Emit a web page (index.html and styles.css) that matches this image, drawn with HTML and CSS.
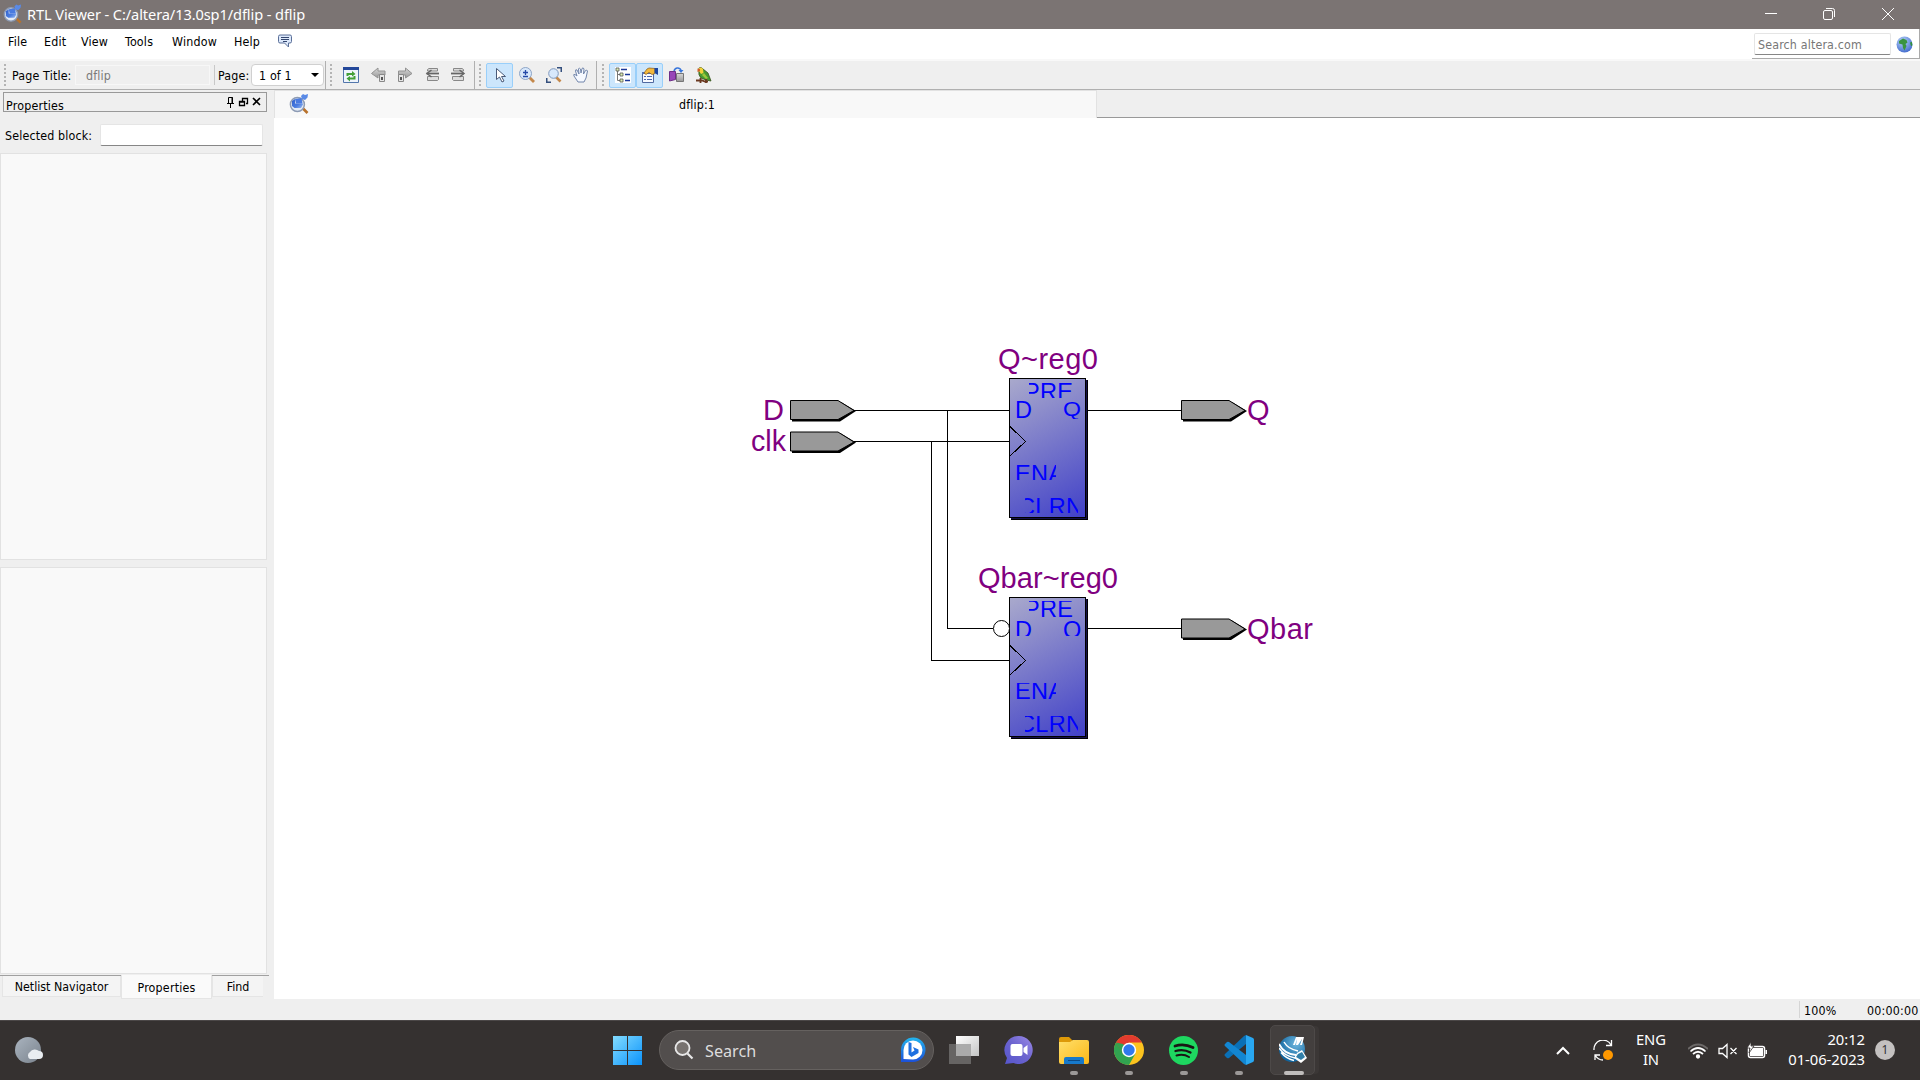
FILE: index.html
```html
<!DOCTYPE html>
<html lang="en">
<head>
<meta charset="utf-8">
<title>RTL Viewer - C:/altera/13.0sp1/dflip - dflip</title>
<link rel="stylesheet" href="styles.css">
</head>
<body>
<svg class="defs" width="0" height="0">
  <defs>
    <linearGradient id="lens" x1="0" y1="0" x2="1" y2="1"><stop offset="0" stop-color="#2f60cc"/><stop offset=".6" stop-color="#4b7de0"/><stop offset="1" stop-color="#9cbcf0"/></linearGradient>
    <linearGradient id="gray" x1="0" y1="0" x2="0" y2="1"><stop offset="0" stop-color="#d8d8d8"/><stop offset="1" stop-color="#999"/></linearGradient>
    <linearGradient id="block" gradientUnits="userSpaceOnUse" x1="1010" y1="379" x2="1086" y2="518"><stop offset="0" stop-color="#a9a9cc"/><stop offset="1" stop-color="#4040c8"/></linearGradient>
    <linearGradient id="win" x1="0" y1="0" x2="1" y2="1"><stop offset="0" stop-color="#83dcff"/><stop offset="1" stop-color="#0b93fb"/></linearGradient>
    <linearGradient id="bing" x1="0" y1="0" x2="0" y2="1"><stop offset="0" stop-color="#22b5ee"/><stop offset="1" stop-color="#1c50d8"/></linearGradient>
    <linearGradient id="chat" x1="1" y1="0" x2="0" y2="1"><stop offset="0" stop-color="#9c8ae8"/><stop offset=".5" stop-color="#6b63cf"/><stop offset="1" stop-color="#5656cc"/></linearGradient>
    <linearGradient id="folder" x1="0" y1="0" x2="1" y2="1"><stop offset="0" stop-color="#ffdf6b"/><stop offset="1" stop-color="#fcb816"/></linearGradient>
    <linearGradient id="moon" x1="0" y1="0" x2="1" y2="1"><stop offset="0" stop-color="#aab4bf"/><stop offset="1" stop-color="#7a838d"/></linearGradient>
    <linearGradient id="tv" x1="0" y1="0" x2="1" y2="1"><stop offset="0" stop-color="#fff"/><stop offset="1" stop-color="#c4c4c4"/></linearGradient>
    <radialGradient id="qt" cx=".65" cy=".3" r=".7"><stop offset="0" stop-color="#6fb6dd"/><stop offset="1" stop-color="#0f649e"/></radialGradient>
    <radialGradient id="globe" cx=".4" cy=".3" r=".75"><stop offset="0" stop-color="#b9d5fb"/><stop offset="1" stop-color="#3f68cc"/></radialGradient>
    <symbol id="viewer" viewBox="0 0 20 20">
      <path d="M14 14.500l4.500 4.500" stroke="#b8722c" stroke-width="2.600"/>
      <circle cx="8.400" cy="10.500" r="7" fill="#e4ebf5" stroke="#8d9bb4" stroke-width="1.500"/>
      <path d="M3 7l3-2v4.500h7.500l.5 1-2 3.500H5.500L3 12z" fill="url(#lens)"/>
      <path d="M6 5l6.500-1 1 5.500H7z" fill="#4a7be0"/>
      <path d="M12 2l2-2 2 1 3-1-.5 3.500L16 6l-3-1z" fill="#5a8ae6"/>
    </symbol>
  </defs>
</svg>
<div class="window">
  <header class="titlebar">
    <svg class="app-icon" width="19" height="20"><use href="#viewer"/></svg>
    <h1 class="title">RTL Viewer - C:/altera/13.0sp1/dflip - dflip</h1>
    <svg class="caption" width="150" height="29" fill="none" stroke="#fff">
      <path d="M15 13.500h12M132 8l12 12M144 8l-12 12"/>
      <rect x="73.500" y="10.500" width="9" height="9" rx="1.500"/><path d="M76 8.500h6.500a2 2 0 0 1 2 2V17"/>
    </svg>
  </header>
  <nav class="menubar">
    <span class="m1">File</span><span class="m2">Edit</span><span class="m3">View</span><span class="m4">Tools</span><span class="m5">Window</span><span class="m6">Help</span>
    <svg class="feedback" width="14" height="14"><path d="M2 1h10q1.500 0 1.500 1.500v5q0 1.500-1.500 1.500h-1.500v4L6.500 9H2Q.5 9 .5 7.500v-5Q.5 1 2 1z" fill="#dce8fa" stroke="#5a6f98"/><path d="M3 3.500h8M3 5.500h8M5 7.500h4" stroke="#33466f"/></svg>
    <div class="websearch">
      <div class="webinput">Search altera.com</div>
      <svg width="17" height="17"><circle cx="8.500" cy="8.500" r="8" fill="url(#globe)"/><path d="M3 5l4-2.500L10.500 4l1 2.500-2 1.500 1 2-2 4.500L7 12l-.5-3.500-3.500-1z" fill="#3a9440"/><path d="M14 6.500l2-.5.300 3.500-1.300.5z" fill="#2f8f3b"/></svg>
    </div>
  </nav>
  <div class="toolbars">
    <section class="bar bar-page">
      <i class="grip"></i><span class="page-title">Page Title:</span><div class="title-field">dflip</div><i class="split"></i><span class="page-label">Page:</span>
      <div class="select"><span>1 of 1</span><svg width="8" height="4"><path d="M0 0h8L4 4z"/></svg></div>
    </section>
    <section class="bar bar-nav">
      <i class="grip"></i>
      <svg class="n1" width="16" height="16"><path d="M.5.5h15v15H.5z" fill="#eef4fc" stroke="#5377ac"/><path d="M0 0h16v3H0z" fill="#24489a"/><path d="M3.500 9V6H9V4l3.500 3L9 9.500V8H5.500v1zM12.500 9v3.500H7v2L3.500 11.500 7 9v1.500h3.500V9z" fill="#43a038"/></svg>
      <svg class="n2" width="16" height="16"><path d="M.5 6.500L7 1v3h7v4H7v3z" fill="url(#gray)" stroke="#929292"/><path d="M8.500 7.500h5v7h-5z" fill="#e6e6e6" stroke="#888"/><path d="M10 10h2v3h-2z" fill="#555"/></svg>
      <svg class="n3" width="16" height="16"><path d="M15 6.500L8.500 1v3h-7v4h7v3z" fill="url(#gray)" stroke="#929292"/><path d="M1.500 7.500h5v7h-5z" fill="#e6e6e6" stroke="#888"/><path d="M3 10h2v3H3z" fill="#555"/></svg>
      <svg class="n4" width="16" height="16"><path d="M2.500 4V2.500L4 1.500h8.500V4zM2.500 9.500v4h10l1-1v-3z" fill="#ddd" stroke="#888"/><path d="M1.500 6.500h12.500" stroke="#666" stroke-width="1.800"/><path d="M6.500 3L2 6.500 6.500 10" fill="none" stroke="#666" stroke-width="1.500"/></svg>
      <svg class="n5" width="16" height="16"><path d="M13.500 4V2.500L12 1.500H3.500V4zM13.500 9.500v4h-10l-1-1v-3z" fill="#ddd" stroke="#888"/><path d="M1 6.500h12.500" stroke="#666" stroke-width="1.800"/><path d="M9.500 3L14 6.500 9.500 10" fill="none" stroke="#666" stroke-width="1.500"/></svg>
    </section>
    <section class="bar bar-mode">
      <i class="grip"></i>
      <button class="tool on"><svg width="16" height="16"><path d="M4.500 1.500v11l3-2.500 2.500 5 2-1-2.500-4.500h4z" fill="#fff" stroke="#4a5a78"/></svg></button>
      <button class="tool"><svg width="16" height="16"><path d="M10.500 10.500l4.500 4.500" stroke="#c4884a" stroke-width="2.800"/><circle cx="6.500" cy="6.500" r="6" fill="#d8e8fb" stroke="#8da4c6"/><path d="M4 5.500h5M6.500 3v5M4 9.500h5" stroke="#2549a8" stroke-width="1.300"/></svg></button>
      <button class="tool"><svg width="16" height="16"><path d="M11 .75h4.250V5M.75 11v4.250H5" fill="none" stroke="#34507e" stroke-width="1.500"/><path d="M10 10l4.500 4.500" stroke="#c4884a" stroke-width="2.600"/><circle cx="7.500" cy="6.500" r="4.800" fill="#d8e8fb" stroke="#7f98bd"/></svg></button>
      <button class="tool"><svg width="16" height="16"><path d="M5 15L1 9q-1-2 1-1.500L4 9 2.500 4q0-2 1.500-1l2 4-.5-5q.8-2 2 0L8 6l1-4.500q1.300-1.500 2 .5L10.500 7l2-3.500q1.500-1 2 .5L13 11l-2 4z" fill="#f6f9ff" stroke="#7286ab"/></svg></button>
    </section>
    <section class="bar bar-view">
      <i class="grip"></i>
      <button class="tool on"><svg width="16" height="16"><path fill="#fff" d="M0 0h16v16H0z"/><path d="M2.500 3v10.500H7M2.500 7.500H7" fill="none" stroke="#777"/><path d="M1 1h3v3H1zM5 6h3v3H5zM5 12h3v3H5z" fill="#dcedb0" stroke="#555" stroke-width=".8"/><path d="M6 2.500h6M10 7.500h5M10 13.500h5" stroke="#1c3899" stroke-width="1.500"/></svg></button>
      <button class="tool on"><svg width="16" height="16"><path d="M.5 5.500h11v10H.5z" fill="#f6f9ff" stroke="#5069a0"/><path d="M0 5h12v2H0z" fill="#5270b5"/><path d="M2 9.500h2M5 9.500h5M2 12.500h2M5 12.500h5" stroke="#4a66ae"/><path d="M2 6l3-4 2-1 6 .5v5l-3 1-3-2-3 2z" fill="#f2b83c" stroke="#8a5a18" stroke-width=".7"/><path d="M12.500 1H16v7l-3.500-2z" fill="#1d47a2"/></svg></button>
      <button class="tool"><svg width="16" height="16"><path d="M5 4q1-3.500 4-3t3 3" fill="none" stroke="#3976db" stroke-width="1.500"/><path d="M9.500 3h5L12 6z" fill="#3976db"/><path d="M.5 4.500h6v8l-6 1.500z" fill="#9847b8" stroke="#6e2e89"/><path d="M7.500 6.500h7v8h-7z" fill="url(#gray)" stroke="#777"/></svg></button>
      <button class="tool"><svg width="16" height="16"><path d="M3 1q2-1.500 4 1l5 4 3 8-5-1-5-2Q2 8 3 4z" fill="#469a30" stroke="#37501c" stroke-width=".8"/><path d="M3 1q2.500-1.500 4 1l.5 4L5 7 3 4z" fill="#f3d239"/><path d="M1.500 1.500L4 2v2L1.500 5z" fill="#d26025"/><path d="M8 6l4 5-2 1-4-4z" fill="#9ac83a"/><path d="M0 13.500h6l3 1h3M4.500 11v5M10 12v4" fill="none" stroke="#6a3820" stroke-width="1.800"/></svg></button>
    </section>
  </div>
  <main class="work">
    <aside class="dock">
      <div class="dock-head"><span>Properties</span>
        <svg width="36" height="12" fill="none" stroke="#000"><path d="M2.500 7V1.500h4V7M1 7.500h7M4.500 8v4M6 1v6"/><path d="M16.500 5V2.500h5v5H20M16 2.500h6M13.500 5.500h5v4h-5zM13 6h6" stroke-width="1.300"/><path d="M27 2l7 7M34 2l-7 7" stroke-width="1.600"/></svg>
      </div>
      <div class="selected"><span>Selected block:</span><div class="selected-field"></div></div>
      <div class="pane pane-top"></div>
      <div class="pane pane-bottom"></div>
      <div class="dock-tabs"><span class="dt dt1">Netlist Navigator</span><span class="dt dt-on">Properties</span><span class="dt dt3">Find</span></div>
    </aside>
    <section class="editor">
      <div class="tabs"><div class="doc-tab"><svg width="20" height="20"><use href="#viewer"/></svg><span>dflip:1</span></div><div class="tab-rest"></div></div>
      <svg class="canvas" width="1646" height="881" viewBox="274 118 1646 881">
        <g fill="none" stroke="#000" shape-rendering="crispEdges">
          <path d="M854 410.500h156M854 441.500h156M1088 410.500h93M1088 628.500h93M947.500 410v218.500H993M931.500 441v219.500H1010"/>
        </g>
        <g class="ports">
          <g id="port"><path d="M792 402h49l15 9-16 10.500H792z" fill="#000"/><path d="M790.500 400.500H838l16 10L838 419.500h-47.500z" fill="#999" stroke="#000"/></g>
          <use href="#port" y="31.500"/><use href="#port" x="391"/><use href="#port" x="391" y="218.500"/>
        </g>
        <g id="reg" shape-rendering="crispEdges">
          <path d="M1011 380h77v140h-77z" fill="#15104a" stroke="none"/><path d="M1011 519.500h76.500V380" fill="none" stroke="#000"/>
          <path d="M1009.500 378.500h76v139h-76z" fill="url(#block)" stroke="#000"/>
          <path d="M1010 426.500l15.500 15-15.500 14.500" fill="none" stroke="#000"/>
        </g>
        <use href="#reg" y="219"/>
        <circle cx="1001.500" cy="628.500" r="8" fill="#fff" stroke="#000"/>
        <g class="name">
          <text x="763" y="420">D</text>
          <text x="751" y="451" textLength="35" lengthAdjust="spacingAndGlyphs">clk</text>
          <text x="998" y="369" textLength="100">Q~reg0</text>
          <text x="978" y="588" textLength="140">Qbar~reg0</text>
          <text x="1247" y="420">Q</text>
          <text x="1247" y="639" textLength="66">Qbar</text>
        </g>
        <g class="pin">
          <svg x="1029" y="382" width="44" height="16"><text x="-5" y="17.500" textLength="49">PRE</text></svg>
          <svg x="1016" y="401" width="17" height="18"><text x="-1" y="17">D</text></svg>
          <svg x="1063" y="401" width="18" height="18"><text class="pin-q" x="0" y="14.500" textLength="18" lengthAdjust="spacingAndGlyphs">Q</text></svg>
          <svg x="1016" y="464" width="40" height="16"><text x="-1" y="17.500" textLength="49">ENA</text></svg>
          <svg x="1025" y="497" width="53" height="16"><text x="-7" y="17.500" textLength="65">CLRN</text></svg>
          <svg x="1029" y="601" width="44" height="17"><text x="-5" y="16" textLength="49">PRE</text></svg>
          <svg x="1016" y="620" width="17" height="16"><text x="-1" y="17.500">D</text></svg>
          <svg x="1063" y="620" width="18" height="16"><text x="0" y="17.500">Q</text></svg>
          <svg x="1016" y="683" width="40" height="17"><text x="-1" y="16" textLength="49">ENA</text></svg>
          <svg x="1025" y="716" width="53" height="17"><text x="-7" y="16" textLength="65">CLRN</text></svg>
        </g>
      </svg>
    </section>
  </main>
  <footer class="status"><span class="zoom">100%</span><span class="clock">00:00:00</span></footer>
  <div class="taskbar">
    <svg class="weather" width="30" height="28"><circle cx="14" cy="13" r="13" fill="url(#moon)"/><path d="M16 22a4 4 0 0 1 0-7 6 6 0 0 1 9-1 4 4 0 0 1 0 8z" fill="#e9edf1"/></svg>
    <div class="apps">
      <div class="app"><svg width="29" height="29" fill="url(#win)"><path d="M0 0h14v14H0zM15 0h14v14H15zM0 15h14v14H0zM15 15h14v14H15z"/></svg></div>
      <div class="search">
        <svg width="20" height="20" fill="none" stroke="#e8e8e8"><circle cx="8.500" cy="8" r="7" fill="#77726f" stroke-width="1.800"/><path d="M13.500 13.500l5 5" stroke-width="2.200"/></svg>
        <span>Search</span>
        <svg class="bing" width="26" height="26"><path d="M1 25V12.500A12.250 12.250 0 1 1 13 25z" fill="url(#bing)"/><path d="M3.500 22V13a9.500 9.500 0 1 1 9.500 9.500z" fill="#fff"/><path d="M8.500 5v12.500l3 2.500 7-4v-3.500L13 10l1.500 3.500-3 2V6z" fill="#1f70e0"/></svg>
      </div>
      <div class="app"><svg width="30" height="28"><path d="M0 8h22v20H0z" fill="#666463"/><path d="M7 0h23v20H7z" fill="url(#tv)"/><path d="M7 8h15v12H7z" fill="#aaa"/></svg></div>
      <div class="app"><svg width="29" height="28"><path d="M14.500 0a14 14 0 1 1-5 27L1 28l2-6A14 14 0 0 1 14.500 0z" fill="url(#chat)"/><rect x="6.500" y="8" width="12" height="12" rx="2" fill="#fff"/><path d="M19.500 12l4-3v10l-4-3z" fill="#fff"/></svg></div>
      <div class="app run"><svg width="30" height="27"><path d="M0 2q0-2 2-2h8l4 4v4H0z" fill="#dd9908"/><path d="M0 5h11l3-2h14q2 0 2 2v20q0 2-2 2H2q-2 0-2-2z" fill="url(#folder)"/><path d="M5 27v-5q0-2 2-2h16q2 0 2 2v5z" fill="#1779ca"/><path d="M9 23.500h12" stroke="#0b4a86"/></svg></div>
      <div class="app run"><svg width="30" height="30"><circle cx="15" cy="15" r="15" fill="#fcc31e"/><path d="M15 15L2 7.500A15 15 0 0 0 15 30l6.500-11.500z" fill="#31a350"/><path d="M2 7.500a15 15 0 0 1 26 0H15L9 19z" fill="#e33b2e"/><path d="M2 7.500L8.500 18.500 15 15 9 9z" fill="#31a350"/><circle cx="15" cy="15" r="7.200" fill="#fff"/><circle cx="15" cy="15" r="5.700" fill="#3079ed"/></svg></div>
      <div class="app run"><svg width="29" height="29"><circle cx="14.500" cy="14.500" r="14.500" fill="#1ed760"/><g fill="none" stroke="#191414" stroke-linecap="round"><path d="M6 10q9-3 18 1.500" stroke-width="2.800"/><path d="M6.500 15q8-2.500 15 1.500" stroke-width="2.300"/><path d="M7.500 19.500q7-2 12.500 1.500" stroke-width="2"/></g></svg></div>
      <div class="app run"><svg width="30" height="30"><path d="M22 0l-2 1L1.500 18.500q-2 1.500 0 3L3 23q1 .5 2 0L22 9z" fill="#0a70b6"/><path d="M22 30l-2-1L1.500 11.500q-2-1.500 0-3L3 7q1-.5 2 0l17 13z" fill="#1286d2"/><path d="M22 0l7 3q1 .5 1 2v20q0 1.500-1 2l-7 3z" fill="#29a7f1"/></svg></div>
      <div class="app active"><svg width="28" height="30"><circle cx="13" cy="14" r="13" fill="url(#qt)"/><g fill="none" stroke="#fff"><path d="M0 9q5 10 17 11" stroke-width="1.800"/><path d="M0 13q5 8 16 10M2 17.500q5 6 13 8M5 7q4 7 14 9" stroke-width="1.500"/></g><path d="M14 10l3-8h8l-2 8h-2l2-6-4 6h-2l1-6-2 6z" fill="#fff"/><path d="M18 18l5-3 5 8-6 5-7-5z" fill="#fff"/><path d="M19 19l4-2 3 5-4 3-5-3z" fill="#317fa9"/></svg></div>
    </div>
    <div class="tray">
      <svg class="chev" width="14" height="9"><path d="M1 8l6-6 6 6" fill="none" stroke="#fff" stroke-width="2"/></svg>
      <svg class="sync" width="21" height="21" fill="none" stroke="#fff" stroke-width="1.300"><path d="M1 10A9 9 0 0 1 18 5M18.500 0v5.500H13M2 20v-5h5M2 15q3 5 8 5"/><circle cx="15" cy="15" r="5" fill="#ff9800" stroke="none"/></svg>
      <div class="lang">ENG<br>IN</div>
      <svg class="wifi" width="20" height="16" fill="none" stroke="#fff" stroke-width="1.700"><path d="M0 6q10-9 20 0" stroke="#6c6968"/><path d="M2.500 8.500q7.500-7 15 0M5 11q5-4.500 10 0"/><circle cx="10" cy="13.500" r="1.300" fill="#fff"/></svg>
      <svg class="mute" width="20" height="16" fill="none" stroke="#fff" stroke-width="1.300"><path d="M1 5.500h3.500L9 1.500v13l-4.500-4H1zM12.500 5l6 6M18.500 5l-6 6"/></svg>
      <svg class="batt" width="21" height="17"><rect x="1.500" y="4.500" width="16" height="11" rx="2" fill="none" stroke="#fff" stroke-width="1.500"/><path d="M3 6h13v8H3zM18.500 8H20v4h-1.500z" fill="#fff"/><path d="M4 0L0 6h3l-1 5 5-7H4z" fill="#fff" stroke="#363130" stroke-width=".8"/></svg>
      <div class="time">20:12<br>01-06-2023</div>
      <span class="badge">1</span>
    </div>
  </div>
</div>
</body>
</html>
```
FILE: styles.css
```css
* { box-sizing: border-box; }
body { margin: 0; background: #efefef; color: #000; font: 12.350px/16px "DejaVu Sans Condensed", "DejaVu Sans", sans-serif; font-stretch: condensed; white-space: nowrap; }
svg { display: block; flex: none; }
.defs { position: absolute; }
.window { width: 1920px; height: 1080px; display: flex; flex-direction: column; overflow: hidden; }

.titlebar { height: 29px; background: #7b7473; display: flex; align-items: center; color: #fff; }
.app-icon { margin: -2px 5px 0 3px; }
.title { margin: -1px 0 0; font: 14.600px/20px "Noto Sans", sans-serif; letter-spacing: -.1px; }
.caption { margin-left: auto; margin-right: 20px; }

.menubar { height: 30px; background: #fff; display: flex; padding: 5px 0 0 8px; }
.menubar > span { letter-spacing: .2px; }
.m1 { width: 36px; } .m2 { width: 37px; } .m3 { width: 44px; } .m4 { width: 47px; } .m5 { width: 62px; } .m6 { width: 44px; }
.websearch { margin: -5px 0 0 auto; width: 168px; height: 30px; border-right: 1px solid #aaa; border-bottom: 1px solid #aaa; display: flex; padding: 4px 0 0 2px; gap: 5px; }
.webinput { width: 137px; height: 22px; border: 1px solid #e5e5e5; border-bottom-color: #868686; border-radius: 2px; color: #777; padding: 3px 0 0 3px; letter-spacing: .15px; }
.websearch svg { margin-top: 3px; }

.toolbars { height: 31px; display: flex; border-top: 2px solid #f8f8f8; border-bottom: 1px solid #b0b0b0; }
.bar { display: flex; align-items: center; border-right: 1px solid #b0b0b0; flex: none; }
.bar-page { width: 326px; letter-spacing: .15px; } .bar-nav { width: 149px; } .bar-mode { width: 122px; } .bar-view { border-right: 0; }
.grip { width: 2px; height: 22px; margin: 0 6px 0 4px; background: repeating-linear-gradient(#b4b4b4 0 2px, transparent 2px 4px); flex: none; }
.page-title { width: 63px; padding-top: 1px; }
.title-field { width: 135px; height: 20px; border: 1px solid #f7f7f7; padding: 2px 0 0 10px; color: #7a7a7a; }
.split { width: 1px; height: 20px; background: #c8c8c8; margin: 0 3px 0 4px; }
.page-label { width: 34px; padding-top: 1px; }
.select { width: 73px; height: 22px; margin-left: -1px; background: #fff; border: 1px solid #d0d0d0; border-radius: 4px; display: flex; align-items: center; justify-content: space-between; padding: 0 4px 0 7px; }
.select span { padding-top: 1px; }
.n1 { margin-left: 5px; } .n2 { margin-left: 12px; } .n3 { margin-left: 10px; } .n4 { margin-left: 12px; } .n5 { margin-left: 9px; }
.tool { width: 27px; height: 25px; border: 0; padding: 0; background: none; display: flex; align-items: center; justify-content: center; }
.tool.on { background: #cce6fc; border: 1px solid #99cffa; border-radius: 2px; }
.bar-mode .grip { margin-right: 5px; } .bar-view .grip { margin-right: 5px; margin-left: 5px; }

.work { height: 909px; display: flex; }
.dock { width: 274px; display: flex; flex-direction: column; }
.dock-head { margin: 2px 7px 0 3px; width: 264px; height: 20px; border: 1px solid #999; display: flex; justify-content: space-between; padding: 5px 4px 0 2px; letter-spacing: .2px; }
.dock-head svg { margin-top: -2px; }
.selected { height: 41px; display: flex; padding: 12px 0 0 5px; }
.selected span { width: 95px; padding-top: 4px; letter-spacing: .15px; }
.selected-field { width: 163px; height: 22px; background: #fff; border: 1px solid #e5e5e5; border-bottom-color: #868686; border-radius: 2px; }
.pane { width: 267px; border: 1px solid #e2e2e2; background: #f9f9f9; }
.pane-top { height: 407px; } .pane-bottom { height: 407px; margin-top: 7px; }
.dock-tabs { width: 269px; height: 24px; margin-top: 1px; border-top: 1px solid #a0a0a0; display: flex; padding-left: 2px; }
.dt { height: 21px; border: 1px solid #e5e5e5; border-top: 0; background: #f4f4f4; text-align: center; padding-top: 3px; }
.dt1 { width: 119px; }
.dt-on { width: 91px; height: 24px; margin-top: -1px; background: #fafafa; padding-top: 5px; letter-spacing: .2px; }
.dt3 { width: 51px; border-right: 0; }
.editor { width: 1646px; }
.tabs { height: 28px; display: flex; }
.doc-tab { width: 823px; background: #f8f8f8; display: flex; align-items: center; padding: 0 0 1px 14px; border: 1px solid #e2e2e2; border-width: 1px 1px 0; }
.doc-tab span { flex: 1; padding: 2px 0 0 370px; letter-spacing: .15px; }
.tab-rest { flex: 1; border-bottom: 1px solid #999; }
.canvas { background: #fff; }
.name { font: 29px "Liberation Sans", sans-serif; fill: #800080; }
.pin { font: 23.500px "Liberation Sans", sans-serif; fill: #00f; }
.pin-q { font-size: 20px; }

.status { height: 21px; display: flex; justify-content: flex-end; }
.zoom { width: 68px; height: 17px; margin-top: 2px; border-left: 1px solid #d5d5d5; padding: 2px 0 0 4px; letter-spacing: .2px; }
.clock { width: 53px; padding-top: 4px; letter-spacing: .2px; }

.taskbar { height: 60px; background: #353130; border-top: 1px solid #4b4747; display: flex; color: #fff; font-family: "Noto Sans", sans-serif; font-stretch: normal; }
.weather { margin: 16px 0 0 14px; }
.apps { margin-left: 556px; display: flex; align-items: flex-start; width: 722px; }
.app { width: 55px; height: 50px; margin-top: 4px; display: flex; align-items: center; justify-content: center; flex: none; position: relative; }
.run::after, .active::after { content: ""; position: absolute; bottom: 0; left: 24px; width: 8px; height: 4px; border-radius: 2px; background: #9b9897; }
.active { width: 45px; margin-left: 4px; background: #433f3e; border: 1px solid #4d4948; border-radius: 5px; box-shadow: 5px 0 0 -1px #3b3736; }
.active::after { left: 13px; bottom: -1px; width: 20px; background: #c0bdbc; }
.search { width: 275px; height: 40px; margin: 9px 2px 0 4px; flex: none; border-radius: 20px; background: #524e4d; border: 1px solid #65615f; display: flex; align-items: center; padding: 0 7px 0 14px; font-size: 16.200px; color: #ddd; }
.search span { margin: 1px 0 0 11px; }
.bing { margin-left: auto; }
.tray { flex: 1; display: flex; align-items: center; font-size: 14.800px; line-height: 20px; letter-spacing: -.05px; }
.chev { margin-left: 234px; } .sync { margin-left: 23px; }
.lang { width: 48px; margin-left: 13px; margin-top: -3px; text-align: center; }
.wifi { margin-left: 13px; } .mute { margin-left: 10px; } .batt { margin-left: 9px; }
.time { width: 90px; margin-left: 7px; margin-top: -4px; text-align: right; }
.badge { width: 20px; height: 20px; margin-left: 10px; margin-top: -1px; border-radius: 50%; background: #c4c1c0; color: #333; text-align: center; font-size: 12px; }
```
